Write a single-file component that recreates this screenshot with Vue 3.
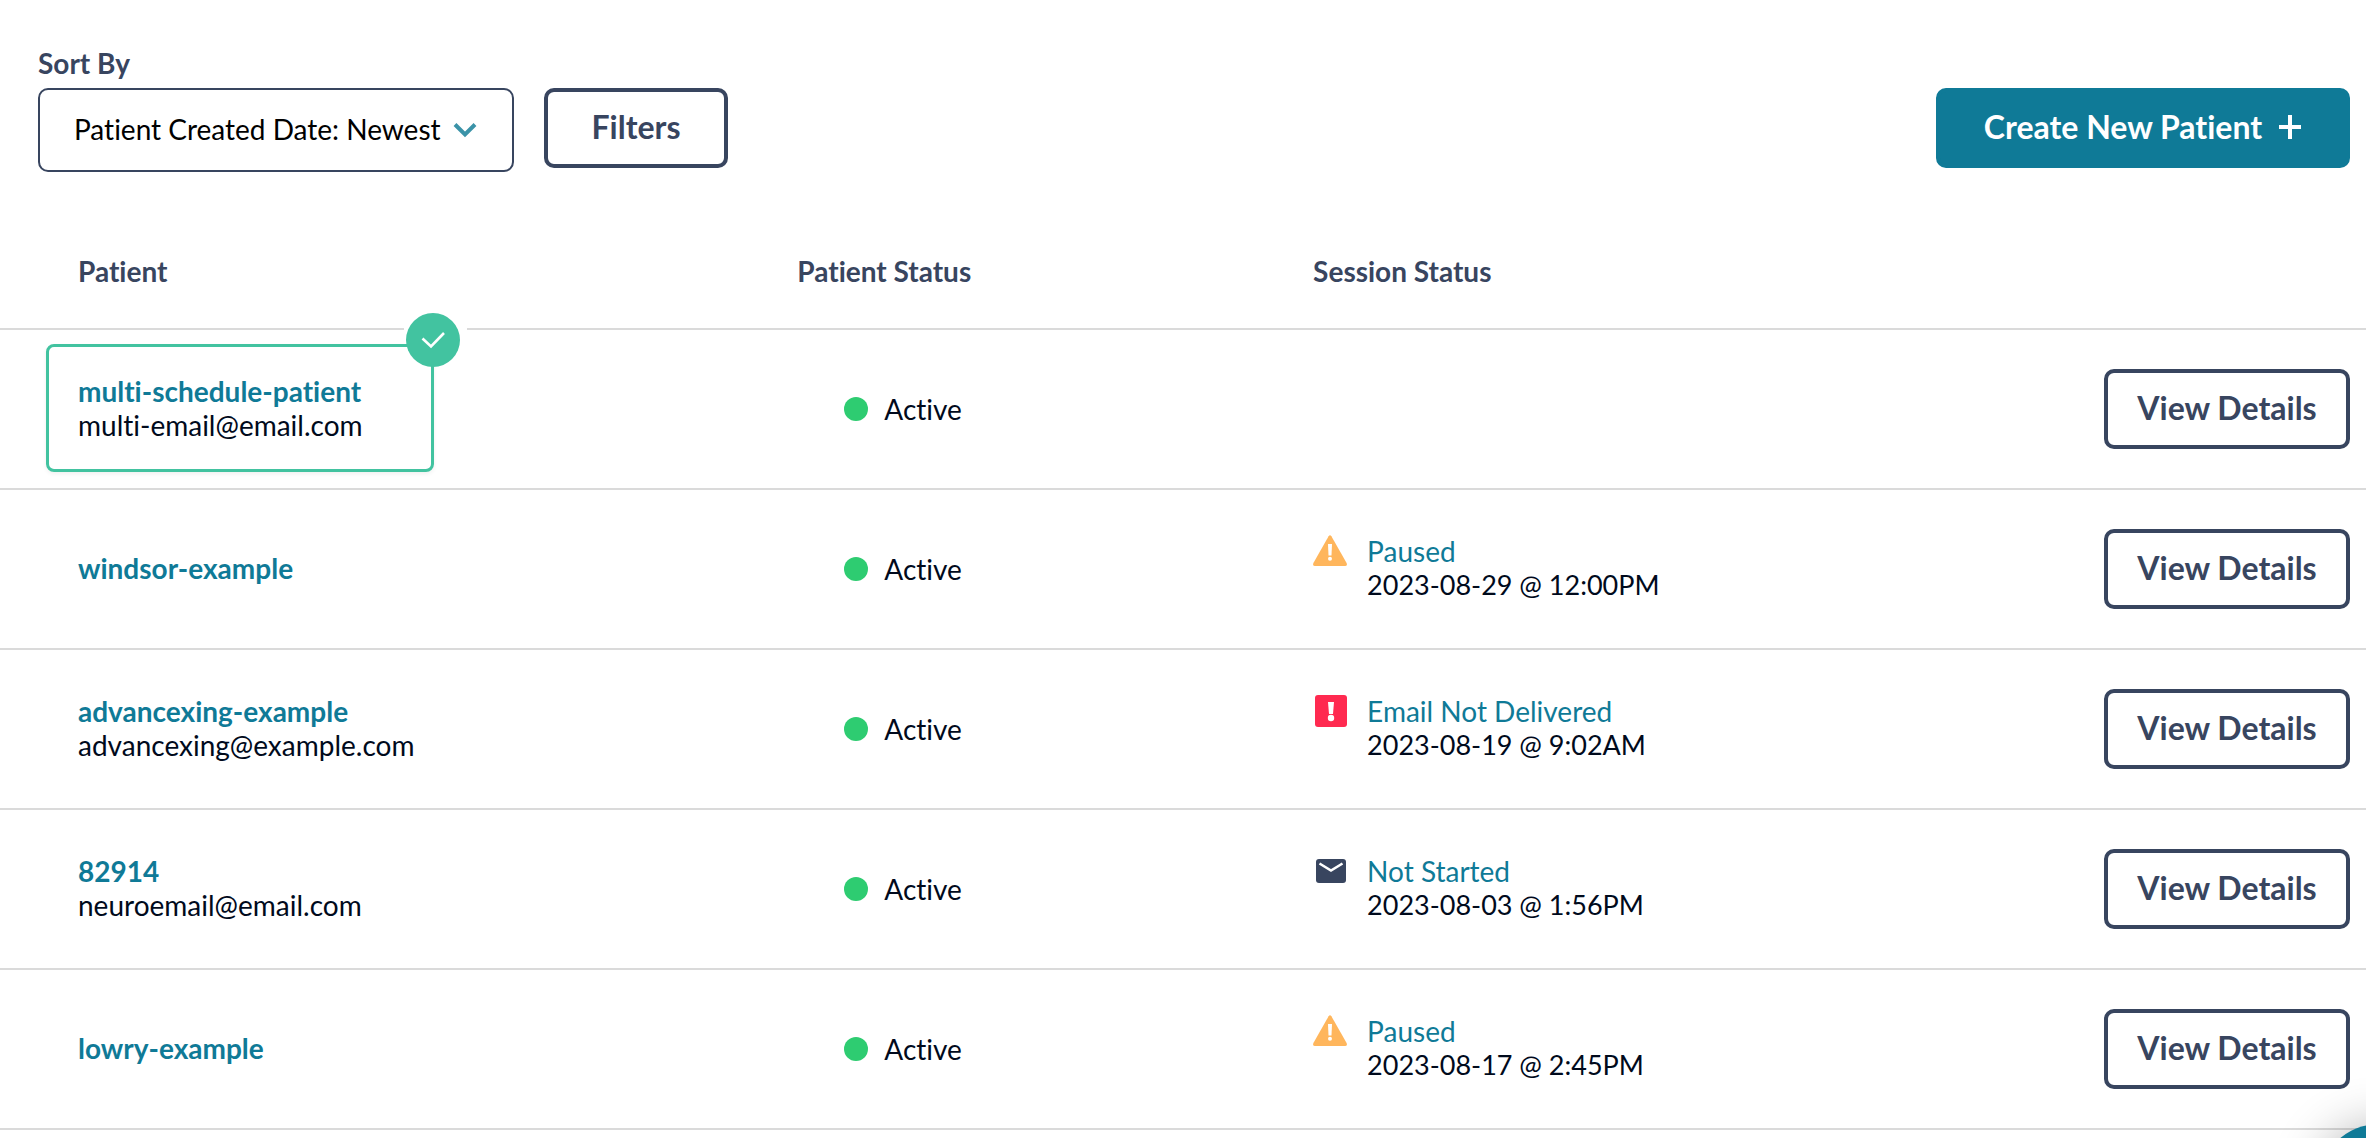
<script setup>
import { ref } from "vue";

const sortBy = ref("created-desc");

const patients = [
  {
    name: "multi-schedule-patient",
    email: "multi-email@email.com",
    status: "Active",
    selected: true,
  },
  {
    name: "windsor-example",
    status: "Active",
    session: { type: "paused", label: "Paused", date: "2023-08-29 @ 12:00PM" },
  },
  {
    name: "advancexing-example",
    email: "advancexing@example.com",
    status: "Active",
    session: {
      type: "failed",
      label: "Email Not Delivered",
      date: "2023-08-19 @ 9:02AM",
    },
  },
  {
    name: "82914",
    email: "neuroemail@email.com",
    status: "Active",
    session: {
      type: "pending",
      label: "Not Started",
      date: "2023-08-03 @ 1:56PM",
    },
  },
  {
    name: "lowry-example",
    status: "Active",
    session: { type: "paused", label: "Paused", date: "2023-08-17 @ 2:45PM" },
  },
];
</script>

<template>
  <main class="page">
    <div class="toolbar">
      <div class="sort">
        <label class="sort-label" for="sort-by">Sort By</label>
        <div class="select-wrapper">
          <select id="sort-by" v-model="sortBy" class="sort-select">
            <option value="created-desc">Patient Created Date: Newest</option>
            <option value="created-asc">Patient Created Date: Oldest</option>
          </select>
          <svg class="chevron" viewBox="0 0 24 16" aria-hidden="true">
            <path d="M2 2.5 12 12.5 22 2.5" fill="none" stroke="#3b93a8" stroke-width="4" />
          </svg>
        </div>
      </div>
      <button class="btn btn-outline filters-btn">Filters</button>
      <button class="btn btn-primary">
        Create New Patient
        <svg class="plus" viewBox="0 0 24 24" aria-hidden="true">
          <path d="M12 0v24M1 12h22" stroke="#fff" stroke-width="4" />
        </svg>
      </button>
    </div>

    <table class="patients">
      <colgroup>
        <col class="col-patient" />
        <col class="col-status" />
        <col class="col-session" />
        <col />
      </colgroup>
      <thead>
        <tr>
          <th class="patient-head">Patient</th>
          <th>Patient Status</th>
          <th>Session Status</th>
          <th></th>
        </tr>
      </thead>
      <tbody>
        <tr v-for="patient in patients" :key="patient.name">
          <td class="patient-cell">
            <div class="patient" :class="{ selected: patient.selected }">
              <a class="patient-name" href="#">{{ patient.name }}</a>
              <span v-if="patient.email">{{ patient.email }}</span>
              <span v-if="patient.selected" class="badge">
                <svg viewBox="0 0 54 54" aria-hidden="true">
                  <circle cx="27" cy="27" r="27" fill="#42c3a0" />
                  <path d="M16.5 25.5 25 33.5 38 20" fill="none" stroke="#fff" stroke-width="2.6" />
                </svg>
              </span>
            </div>
          </td>
          <td>
            <div class="status"><span class="dot"></span>{{ patient.status }}</div>
          </td>
          <td class="session-cell">
            <div v-if="patient.session" class="session">
              <svg
                v-if="patient.session.type === 'paused'"
                class="session-icon"
                viewBox="0 0 34 34"
                aria-hidden="true"
              >
                <path
                  d="M15.6 2.2Q17 .2 18.4 2.2L33.6 29Q34.6 32 32 32H2Q-.6 32 .4 29Z"
                  fill="#ffb65c"
                />
                <path d="M15 10h4l-.5 11.5h-3z" fill="#fff" />
                <circle cx="17" cy="24.8" r="2" fill="#fff" />
              </svg>
              <svg
                v-else-if="patient.session.type === 'failed'"
                class="session-icon"
                viewBox="0 0 34 34"
                aria-hidden="true"
              >
                <rect x="2" y="1" width="32" height="32" rx="3" fill="#ff2a50" />
                <path d="M15 8h6l-1 12h-4z" fill="#fff" />
                <circle cx="18" cy="24" r="3.2" fill="#fff" />
              </svg>
              <svg v-else class="session-icon" viewBox="0 0 34 34" aria-hidden="true">
                <rect x="3" y="5" width="30" height="24" rx="3" fill="#38455f" />
                <path d="M6.5 9.5 18 16.5 29.5 9.5" fill="none" stroke="#fff" stroke-width="2.6" />
              </svg>
              <div class="session-text">
                <a href="#">{{ patient.session.label }}</a>
                <span class="session-date">{{ patient.session.date }}</span>
              </div>
            </div>
          </td>
          <td class="actions-cell">
            <button class="btn btn-outline">View Details</button>
          </td>
        </tr>
      </tbody>
    </table>

    <button class="help-btn" aria-label="Help"></button>
  </main>
</template>

<style>
body {
  background: #fff;
}
</style>

<style scoped>
.page {
  padding-top: 46px;
  color: #000a1c;
  font-family: Lato, "Open Sans", sans-serif;
  font-size: 28px;
  font-variant-ligatures: none;
  line-height: 34px;
}

.toolbar {
  display: flex;
  align-items: flex-end;
  gap: 30px;
  padding: 0 16px 0 38px;
}

.sort-label {
  display: block;
  margin-bottom: 8px;
  color: #38455f;
  font-weight: 700;
}

.select-wrapper {
  position: relative;
}

.sort-select {
  display: block;
  appearance: none;
  min-width: 476px;
  height: 84px;
  padding: 0 60px 2px 34px;
  background: #fff;
  border: 2px solid #38455f;
  border-radius: 10px;
  color: #000;
  font: inherit;
}

.chevron {
  position: absolute;
  top: 34px;
  right: 37px;
  width: 24px;
  height: 16px;
  pointer-events: none;
}

.btn {
  display: inline-flex;
  align-items: center;
  justify-content: center;
  height: 80px;
  padding: 0 28px 2px;
  border: 4px solid #38455f;
  border-radius: 10px;
  font: inherit;
  font-size: 32px;
  font-weight: 700;
  white-space: nowrap;
  cursor: pointer;
}

.btn-outline {
  background: #fff;
  color: #38455f;
}

.filters-btn {
  min-width: 184px;
  margin-bottom: 4px;
}

.btn-primary {
  gap: 16px;
  min-width: 414px;
  margin-bottom: 4px;
  margin-left: auto;
  background: #0f7a97;
  border-color: #0f7a97;
  color: #fff;
}

.plus {
  width: 24px;
  height: 24px;
}

.patients {
  width: 100%;
  margin-top: 44px;
  border-collapse: separate;
  border-spacing: 0;
  table-layout: fixed;
}

.col-patient {
  width: 33.7%;
}

.col-status {
  width: 21.8%;
}

.col-session {
  width: 24%;
}

th,
td {
  box-sizing: border-box;
  padding: 0;
  border-bottom: 2px solid #dadada;
  text-align: left;
}

th {
  height: 114px;
  padding-bottom: 2px;
  color: #38455f;
  font-weight: 700;
}

td {
  height: 160px;
}

.patient-head {
  padding-left: 78px;
}

.patient-cell {
  padding-bottom: 2px;
  padding-left: 46px;
}

.session-cell {
  padding-bottom: 2px;
}

.patient {
  position: relative;
  display: flex;
  flex-direction: column;
  align-items: flex-start;
  width: fit-content;
  min-width: 388px;
  padding: 27px 29px;
  border: 3px solid transparent;
  border-radius: 8px;
  box-sizing: border-box;
}

.patient.selected {
  border-color: #42c3a0;
  box-shadow: 0 2px 4px rgba(0, 0, 0, 0.06);
}

.badge {
  position: absolute;
  top: -34px;
  right: -36px;
  width: 54px;
  height: 54px;
  padding: 0 7px 0 2px;
  background: linear-gradient(#fff, #fff) 0 0 / 100% 24px no-repeat;
}

.badge svg {
  display: block;
}

a {
  color: #0f7a97;
  text-decoration: none;
}

.patient-name {
  font-weight: 700;
}

.status {
  display: flex;
  align-items: center;
  gap: 16px;
  padding-left: 47px;
}

.dot {
  width: 24px;
  height: 24px;
  background: #2ecc71;
  border-radius: 50%;
}

.session {
  display: flex;
  align-items: flex-start;
  gap: 20px;
}

.session-icon {
  width: 34px;
  height: 34px;
}

.session-text {
  display: flex;
  flex-direction: column;
}

.session-date {
  font-size: 27px;
}

.actions-cell {
  padding-right: 16px;
  text-align: right;
}

.actions-cell .btn {
  min-width: 246px;
  vertical-align: middle;
}

.help-btn {
  position: fixed;
  right: -73px;
  bottom: -106px;
  width: 120px;
  height: 120px;
  background: #0f7a97;
  border: 0;
  border-radius: 50%;
  box-shadow: 0 2px 50px rgba(0, 0, 0, 0.3);
}
</style>
